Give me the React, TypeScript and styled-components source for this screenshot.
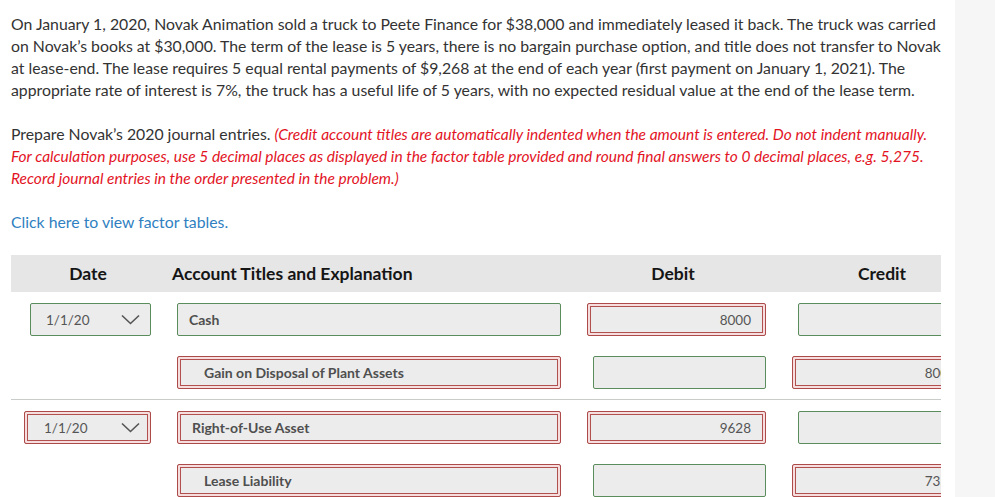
import * as React from 'react'
import styled, { createGlobalStyle } from 'styled-components'

// global
const GlobalStyle = createGlobalStyle`
  html, body {
    margin: 0;
    padding: 0;
    background: #ffffff;
  }
  body {
    font-family: Lato, "Open Sans", "Liberation Sans", sans-serif;
    color: #333333;
  }
`

// layout
const Page = styled.div`
  display: flex;
  min-height: 497px;
`

const Main = styled.main`
  width: 955px;
  flex: none;
  box-sizing: border-box;
  padding: 13px 14px 0 11px;
  background: #ffffff;
  overflow: hidden;
`

const SideStrip = styled.aside`
  flex: 1;
  background: #f6f6f6;
`

const Paragraph = styled.p`
  margin: 0 0 22px 0;
  font-size: 15.8px;
  line-height: 22px;
  color: #333333;
`

const Note = styled.em`
  color: #e3141f;
  font-style: italic;
  font-size: 15.5px;
`

const Link = styled.a`
  display: block;
  margin-bottom: 22px;
  font-size: 15.8px;
  line-height: 22px;
  color: #2f7fc1;
  text-decoration: none;
  cursor: pointer;
`

// table
const Table = styled.div`
  overflow: hidden;
`

const Columns = `
  display: grid;
  grid-template-columns: 160px 405px 206px 200px;
  width: 971px;
`

const HeaderRow = styled.div`
  ${Columns}
  height: 37px;
  align-items: center;
  background: #e6e6e6;
`

const HeadCell = styled.div<{ $align: 'center' | 'left'; $pad?: string }>`
  font-size: 17.5px;
  font-weight: 700;
  color: #151515;
  text-align: ${(p) => p.$align};
  padding: ${(p) => p.$pad || '0'};
`

const Entry = styled.div`
  padding: 11px 0 10px;
  border-bottom: 1px solid #c9cdc9;

  &:last-child {
    border-bottom: none;
  }
`

const Row = styled.div`
  ${Columns}
  height: 33px;

  & + & {
    margin-top: 20px;
  }
`

const Cell = styled.div<{ $justify: 'start' | 'end'; $pad?: string }>`
  display: flex;
  justify-content: ${(p) => (p.$justify === 'end' ? 'flex-end' : 'flex-start')};
  padding: ${(p) => p.$pad || '0'};
`

// input boxes: green = ok, red = wrong (double border)
const Box = styled.div<{ $bad?: boolean; $w: number; $indent?: number; $right?: boolean }>`
  box-sizing: border-box;
  width: ${(p) => p.$w}px;
  height: 33px;
  display: flex;
  align-items: center;
  justify-content: ${(p) => (p.$right ? 'flex-end' : 'flex-start')};
  padding: 0 ${(p) => (p.$right ? '14px' : '0')} 0 ${(p) => p.$indent || 0}px;
  background: #ececec;
  font-size: 13.5px;
  color: #555555;
  border-radius: 2px;
  border: 1px solid ${(p) => (p.$bad ? '#ad4b4b' : '#5b8c5b')};
  box-shadow: ${(p) =>
    p.$bad ? 'inset 0 0 0 2px #f6dede, inset 0 0 0 3px #b24f4f' : 'none'};
  white-space: nowrap;
`

const AccountText = styled.span`
  font-size: 14px;
  font-weight: 700;
  color: #4f4f4f;
`

const DateBox = styled(Box)`
  justify-content: space-between;
  padding-right: 10px;
`

const Chevron = () => (
  <svg width="19" height="11" viewBox="0 0 19 11" fill="none">
    <path d="M1 1.5 L9.5 9.5 L18 1.5" stroke="#555" strokeWidth="1.6" />
  </svg>
)

type Line = {
  date?: { text: string; bad: boolean }
  account: string
  accBad: boolean
  credit: boolean
  debitVal?: string
  debitBad: boolean
  creditVal?: string
  creditBad: boolean
}

const entries: Line[][] = [
  [
    { date: { text: '1/1/20', bad: false }, account: 'Cash', accBad: false, credit: false, debitVal: '8000', debitBad: true, creditBad: false },
    { account: 'Gain on Disposal of Plant Assets', accBad: true, credit: true, debitBad: false, creditVal: '8000', creditBad: true },
  ],
  [
    { date: { text: '1/1/20', bad: true }, account: 'Right-of-Use Asset', accBad: true, credit: false, debitVal: '9628', debitBad: true, creditBad: false },
    { account: 'Lease Liability', accBad: true, credit: true, debitBad: false, creditVal: '7356', creditBad: true },
  ],
]

export default function App() {
  return (
    <>
      <GlobalStyle />
      <Page>
        <Main>
          <Paragraph>
            On January 1, 2020, Novak Animation sold a truck to Peete Finance for $38,000 and immediately leased it back. The truck was carried
            on Novak’s books at $30,000. The term of the lease is 5 years, there is no bargain purchase option, and title does not transfer to Novak
            at lease-end. The lease requires 5 equal rental payments of $9,268 at the end of each year (first payment on January 1, 2021). The
            appropriate rate of interest is 7%, the truck has a useful life of 5 years, with no expected residual value at the end of the lease term.
          </Paragraph>
          <Paragraph>
            Prepare Novak’s 2020 journal entries.{' '}
            <Note>
              (Credit account titles are automatically indented when the amount is entered. Do not indent manually.<br />
              For calculation purposes, use 5 decimal places as displayed in the factor table provided and round final answers to 0 decimal places, e.g. 5,275.<br />
              Record journal entries in the order presented in the problem.)
            </Note>
          </Paragraph>
          <Link>Click here to view factor tables.</Link>

          <Table>
            <HeaderRow>
              <HeadCell $align="center" $pad="0 6px 0 0">Date</HeadCell>
              <HeadCell $align="left" $pad="0 0 0 1px">Account Titles and Explanation</HeadCell>
              <HeadCell $align="center" $pad="0 12px 0 0">Debit</HeadCell>
              <HeadCell $align="center" $pad="0 0 0 0">Credit</HeadCell>
            </HeaderRow>

            {entries.map((rows, i) => (
              <Entry key={i}>
                {rows.map((r, j) => (
                  <Row key={j}>
                    <Cell $justify="end" $pad="0 20px 0 0">
                      {r.date && (
                        <DateBox $bad={r.date.bad} $w={r.date.bad ? 127 : 121} $indent={r.date.bad ? 19 : 15}>
                          <span>{r.date.text}</span>
                          <Chevron />
                        </DateBox>
                      )}
                    </Cell>
                    <Cell $justify="start" $pad="0 0 0 6px">
                      <Box $bad={r.accBad} $w={384} $indent={r.credit ? 26 : r.accBad ? 14 : 11}>
                        <AccountText>{r.account}</AccountText>
                      </Box>
                    </Cell>
                    <Cell $justify="end" $pad="0 16px 0 0">
                      <Box $bad={r.debitBad} $w={r.debitBad ? 179 : 173} $right>
                        {r.debitVal}
                      </Box>
                    </Cell>
                    <Cell $justify="start" $pad={r.creditBad ? '0 0 0 10px' : '0 0 0 16px'}>
                      <Box $bad={r.creditBad} $w={r.creditBad ? 179 : 173} $right>
                        {r.creditVal}
                      </Box>
                    </Cell>
                  </Row>
                ))}
              </Entry>
            ))}
          </Table>
        </Main>
        <SideStrip />
      </Page>
    </>
  )
}
